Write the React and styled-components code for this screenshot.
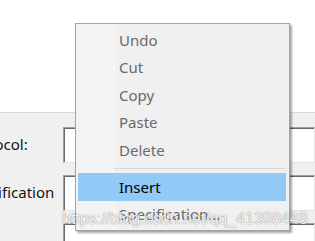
import styled, { createGlobalStyle } from "styled-components"

const GlobalStyle = createGlobalStyle`
    html, body {
        margin: 0;
        padding: 0;
        background-color: #FFFFFF;
    }
    body {
        width: 315px;
        height: 241px;
        overflow: hidden;
    }
`

const menuItems = [
    { label: "Undo", disabled: true },
    { label: "Cut", disabled: true },
    { label: "Copy", disabled: true },
    { label: "Paste", disabled: true },
    { label: "Delete", disabled: true },
    { separator: true },
    { label: "Insert", active: true },
    { label: "Specification...", disabled: true },
]

const fields = ["Protocol:", "Specification", ""]

export default function App() {
    return (
        <Screen>
            <GlobalStyle />
            <TopArea />
            <Dialog>
                {fields.map((label, i) => (
                    <FieldRow key={i}>
                        <FieldLabel>{label}</FieldLabel>
                        <TextBox />
                    </FieldRow>
                ))}
            </Dialog>

            <ContextMenu>
                <Gutter />
                {menuItems.map((item, i) =>
                    item.separator ? (
                        <Separator key={i} />
                    ) : (
                        <MenuItem key={i} $disabled={item.disabled} $active={item.active}>
                            {item.label}
                        </MenuItem>
                    )
                )}
            </ContextMenu>

            <Watermark>https://blog.csdn.net/qq_41398448</Watermark>
        </Screen>
    )
}

const Screen = styled.div`
    position: relative;
    width: 315px;
    height: 241px;
    overflow: hidden;
    display: flex;
    flex-direction: column;
    font-family: "Noto Sans", "Open Sans", sans-serif;
`

const TopArea = styled.div`
    height: 112px;
    background-color: #FFFFFF;
    border-bottom: 1px solid #DADADA;
    flex-shrink: 0;
`

const Dialog = styled.div`
    flex: 1;
    background-color: #F0F0F0;
    padding-top: 14px;
    display: flex;
    flex-direction: column;
    gap: 12px;
    margin-left: -35px;
`

const FieldRow = styled.div`
    display: flex;
    align-items: center;
    height: 36px;
    flex-shrink: 0;
`

const FieldLabel = styled.div`
    width: 98px;
    flex-shrink: 0;
    font-size: 15px;
    line-height: 20px;
    color: #141414;
    white-space: nowrap;
    margin-top: -2px;
`

const TextBox = styled.div`
    flex: 1;
    height: 36px;
    box-sizing: border-box;
    background-color: #FFFFFF;
    border-top: 1px solid #A0A0A0;
    border-left: 1px solid #A0A0A0;
    border-bottom: 1px solid #E3E3E3;
    border-right: 1px solid #E3E3E3;
    box-shadow: inset 1px 1px 0 #696969;
`

const ContextMenu = styled.div`
    position: absolute;
    left: 75px;
    top: 23px;
    width: 215px;
    height: 208px;
    box-sizing: border-box;
    padding: 2px;
    background-color: #F0F0F0;
    border: 1px solid #A3A3A3;
    box-shadow: 2px 2px 2px rgba(0, 0, 0, 0.35);
    display: flex;
    flex-direction: column;
`

const Gutter = styled.div`
    position: absolute;
    left: 0;
    top: 0;
    bottom: 0;
    width: 38px;
    background-color: #F3F3F3;
    border-right: 1px solid #F8F8F8;
`

const MenuItem = styled.div`
    position: relative;
    height: 27.5px;
    flex-shrink: 0;
    display: flex;
    align-items: center;
    padding-left: 41px;
    font-size: 15px;
    color: ${(p) => (p.$disabled ? "#6A6A6A" : "#000000")};
    background-color: ${(p) => (p.$active ? "#91C9F7" : "transparent")};
    margin-right: 1px;
`

const Separator = styled.div`
    position: relative;
    height: 9.5px;
    flex-shrink: 0;
    &::after {
        content: "";
        position: absolute;
        left: 36px;
        right: 1px;
        top: 4px;
        height: 1px;
        background-color: #D7D7D7;
    }
`

const Watermark = styled.div`
    position: absolute;
    left: 62px;
    top: 208px;
    font-family: "Liberation Sans", Arial, sans-serif;
    font-size: 16px;
    line-height: 22px;
    color: rgba(255, 255, 255, 0.9);
    text-shadow: 0 0 1px rgba(0, 0, 0, 0.45), 0 0 2px rgba(0, 0, 0, 0.15);
    white-space: nowrap;
    pointer-events: none;
`
